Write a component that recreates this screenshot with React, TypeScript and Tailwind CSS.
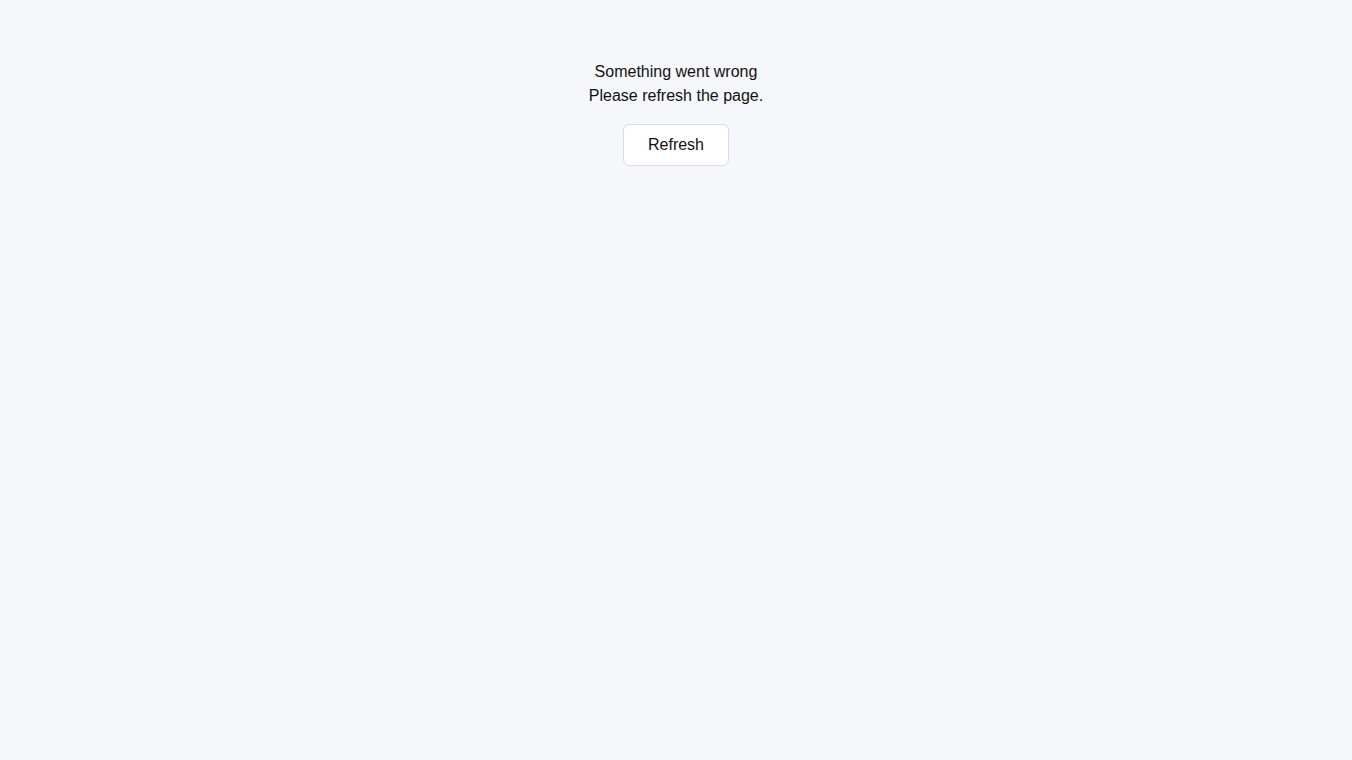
export default function App() {
  const handleRefresh = () => {
    window.location.reload();
  };

  return (
    <div className="min-h-screen w-full bg-[#f5f7fa] pt-[60px] text-center text-base text-[#111] font-['Liberation_Sans',Arial,sans-serif]">
      <p className="leading-6">Something went wrong</p>
      <p className="leading-6">Please refresh the page.</p>
      <button
        type="button"
        onClick={handleRefresh}
        className="mt-4 rounded-md border border-[#d9dde3] bg-white px-6 py-2 leading-6 text-[#111]"
      >
        Refresh
      </button>
    </div>
  );
}
